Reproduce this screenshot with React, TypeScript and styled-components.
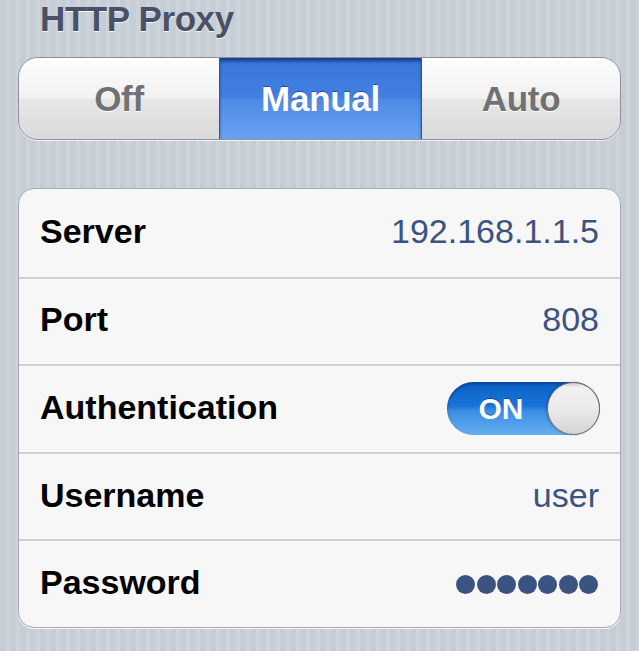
import React from "react";
import styled, { createGlobalStyle } from "styled-components";

const Global = createGlobalStyle`
  html, body { margin: 0; padding: 0; }
  body {
    width: 639px;
    height: 651px;
    overflow: hidden;
    font-family: "Liberation Sans", Arial, Helvetica, sans-serif;
    background: repeating-linear-gradient(
      90deg,
      #c6cdd5 0px,
      #c6cdd5 6px,
      #ccd3da 6px,
      #ccd3da 10px
    );
  }
`;

const Page = styled.div`
  display: flex;
  flex-direction: column;
  padding: 0 18px 0 18px;
  height: 651px;
  box-sizing: border-box;
`;

const Title = styled.h1`
  margin: 0;
  padding: 0 0 0 22px;
  font-size: 35px;
  line-height: 38px;
  font-weight: 700;
  letter-spacing: -0.4px;
  color: #485166;
  text-shadow: 0 1px 0 rgba(255, 255, 255, 0.9);
`;

const Segmented = styled.div`
  margin-top: 19px;
  height: 83px;
  display: grid;
  grid-template-columns: 200px 203px 1fr;
  border: 1px solid #8f9194;
  border-radius: 20px;
  overflow: hidden;
  box-shadow: 0 1px 0 rgba(255, 255, 255, 0.7);
  box-sizing: border-box;
`;

const Segment = styled.div<{ $active?: boolean }>`
  display: flex;
  align-items: center;
  justify-content: center;
  font-size: 35px;
  font-weight: 700;
  letter-spacing: -0.3px;
  color: ${(p) => (p.$active ? "#ffffff" : "#717171")};
  text-shadow: ${(p) =>
    p.$active ? "0 -1px 0 rgba(0, 40, 120, 0.5)" : "0 1px 0 #ffffff"};
  background: ${(p) =>
    p.$active
      ? "linear-gradient(180deg, #2559be 0%, #3a78dd 8%, #427fe0 48%, #4e8be7 52%, #6aa1f1 100%)"
      : "linear-gradient(180deg, #fdfdfd 0%, #f1f1f1 50%, #e6e6e6 51%, #dadada 100%)"};
  border-left: ${(p) => (p.$active ? "1px solid #2657a8" : "none")};
  border-right: ${(p) => (p.$active ? "1px solid #2657a8" : "none")};
  box-shadow: ${(p) =>
    p.$active ? "inset 0 3px 3px rgba(0, 30, 90, 0.45)" : "none"};
`;

const Card = styled.div`
  margin-top: 48px;
  background: #f7f7f7;
  border: 1px solid #a6a9ad;
  border-radius: 16px;
  overflow: hidden;
  box-shadow: 0 1px 0 rgba(255, 255, 255, 0.8);
`;

const Row = styled.div<{ $first?: boolean }>`
  height: 87.6px;
  box-sizing: border-box;
  display: flex;
  align-items: center;
  justify-content: space-between;
  padding: 0 21px 0 21px;
  border-top: ${(p) => (p.$first ? "none" : "2px solid #cfd0d3")};
`;

const Label = styled.span`
  font-size: 34px;
  font-weight: 700;
  color: #000000;
  margin-top: -3px;
`;

const Value = styled.span`
  font-size: 34px;
  font-weight: 400;
  color: #3b5380;
  margin-top: -3px;
`;

const Switch = styled.div`
  position: relative;
  width: 153px;
  height: 53px;
  border-radius: 27px;
  background: linear-gradient(180deg, #0a61c6 0%, #1a74d8 45%, #3a8ee4 55%, #66aef0 100%);
  box-shadow: inset 0 2px 3px rgba(0, 30, 80, 0.45);
  display: flex;
  align-items: center;
  margin-right: -1px;
`;

const SwitchText = styled.span`
  width: 108px;
  text-align: center;
  font-size: 30px;
  font-weight: 700;
  color: #ffffff;
  text-shadow: 0 -1px 0 rgba(0, 40, 110, 0.5);
`;

const Thumb = styled.div`
  position: absolute;
  right: 0;
  top: 0;
  width: 53px;
  height: 53px;
  border-radius: 50%;
  box-sizing: border-box;
  border: 1px solid #6f7277;
  background: linear-gradient(180deg, #c9c9c9 0%, #f0f0f0 8%, #ebebeb 50%, #d4d4d4 100%);
  box-shadow: -1px 0 2px rgba(0, 0, 0, 0.25);
`;

const Dots = styled.div`
  display: flex;
  gap: 1.5px;
  margin-right: 1px;
`;

const Dot = styled.span`
  width: 19px;
  height: 19px;
  border-radius: 50%;
  background: #3b5380;
`;

export default function App() {
  return (
    <>
      <Global />
      <Page>
        <Title>HTTP Proxy</Title>
        <Segmented>
          <Segment>Off</Segment>
          <Segment $active>Manual</Segment>
          <Segment>Auto</Segment>
        </Segmented>
        <Card>
          <Row $first>
            <Label>Server</Label>
            <Value>192.168.1.1.5</Value>
          </Row>
          <Row>
            <Label>Port</Label>
            <Value>808</Value>
          </Row>
          <Row>
            <Label>Authentication</Label>
            <Switch>
              <SwitchText>ON</SwitchText>
              <Thumb />
            </Switch>
          </Row>
          <Row>
            <Label>Username</Label>
            <Value>user</Value>
          </Row>
          <Row>
            <Label>Password</Label>
            <Dots>
              {Array.from({ length: 7 }).map((_, i) => (
                <Dot key={i} />
              ))}
            </Dots>
          </Row>
        </Card>
      </Page>
    </>
  );
}
